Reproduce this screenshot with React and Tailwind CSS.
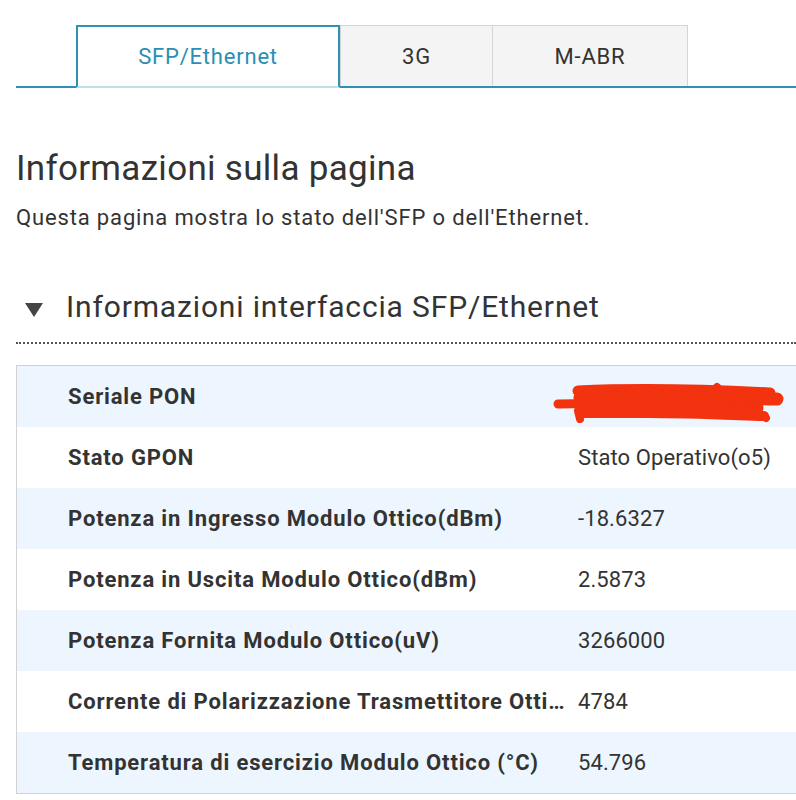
import React from 'react';

const rows = [
  { label: 'Seriale PON', value: '', hidden: true },
  { label: 'Stato GPON', value: 'Stato Operativo(o5)' },
  { label: 'Potenza in Ingresso Modulo Ottico(dBm)', value: '-18.6327' },
  { label: 'Potenza in Uscita Modulo Ottico(dBm)', value: '2.5873' },
  { label: 'Potenza Fornita Modulo Ottico(uV)', value: '3266000' },
  { label: 'Corrente di Polarizzazione Trasmettitore Ottico(uA)', value: '4784' },
  { label: 'Temperatura di esercizio Modulo Ottico (°C)', value: '54.796' },
];

// red marker scribble over the serial number
const Scribble = () => (
  <svg width="240" height="48" viewBox="0 0 240 48" className="absolute left-[-26px] top-[-4px]">
    <g stroke="#f3320f" strokeLinecap="round" strokeLinejoin="round" fill="none">
      <path d="M6 26 L70 25" strokeWidth="9" />
      <path d="M26 13 C90 10 160 12 218 15" strokeWidth="11" />
      <path d="M28 20 C100 19 160 20 225 21" strokeWidth="13" />
      <path d="M30 28 C100 29 160 29 205 30" strokeWidth="13" />
      <path d="M28 35 L95 35" strokeWidth="10" />
      <path d="M95 35 C140 35 180 37 212 38" strokeWidth="10" />
      <path d="M26 33 L28 41" strokeWidth="8" />
      <path d="M165 9 L180 26" strokeWidth="8" />
      <path d="M196 28 L214 40" strokeWidth="8" />
    </g>
  </svg>
);

export default function App() {
  return (
    <div className="w-[796px] h-[800px] overflow-hidden bg-white text-[#333] pl-4" style={{ fontFamily: 'Roboto, "Open Sans", sans-serif' }}>
      {/* Tabs */}
      <div className="pt-[25px] flex border-b-2 border-[#2c93b2] pl-[60px]">
        <div className="w-[264px] h-[63px] -mb-[2px] border-2 border-[#2c93b2] border-b-[#bfe0e8] bg-white flex items-center justify-center text-[22px] text-[#2a8fb2] tracking-[0.8px]">
          SFP/Ethernet
        </div>
        <div className="w-[153px] h-[61px] border border-b-0 border-[#d4d4d4] bg-[#f4f4f4] flex items-center justify-center text-[22px] tracking-[0.8px]">
          3G
        </div>
        <div className="w-[195px] h-[61px] border border-b-0 border-l-0 border-[#d4d4d4] bg-[#f4f4f4] flex items-center justify-center text-[22px] tracking-[0.8px]">
          M-ABR
        </div>
      </div>

      {/* Page info */}
      <h1 className="mt-[59px] text-[35px] leading-[44px] tracking-[0.3px]">Informazioni sulla pagina</h1>
      <p className="mt-[13px] text-[22px] leading-[28px] tracking-[0.85px]">Questa pagina mostra lo stato dell'SFP o dell'Ethernet.</p>

      {/* Section */}
      <div className="mt-[56px] flex items-center">
        <svg width="20" height="16" viewBox="0 0 20 16" className="ml-[8px] mt-[6px]">
          <polygon points="1,1 19,1 10,15" fill="#454545" />
        </svg>
        <h2 className="ml-[22px] text-[30px] leading-[38px] tracking-[0.85px]">Informazioni interfaccia SFP/Ethernet</h2>
      </div>
      <div className="mt-[16px] border-b-2 border-dotted border-[#555]" />

      {/* Table */}
      <div className="mt-[21px] border-l border-t border-b border-[#d2d2d2]">
        {rows.map((r, i) => (
          <div key={r.label} className={`flex items-center h-[61px] ${i % 2 === 0 ? 'bg-[#edf6fe]' : 'bg-white'}`}>
            <div className="w-[548px] shrink-0 pl-[51px] font-bold text-[22px] tracking-[0.85px] truncate">{r.label}</div>
            <div className="pl-[13px] text-[22px] tracking-[0.1px] relative">
              {r.hidden ? (
                <div className="relative w-[200px] h-[30px]">
                  <Scribble />
                </div>
              ) : (
                r.value
              )}
            </div>
          </div>
        ))}
      </div>
    </div>
  );
}
